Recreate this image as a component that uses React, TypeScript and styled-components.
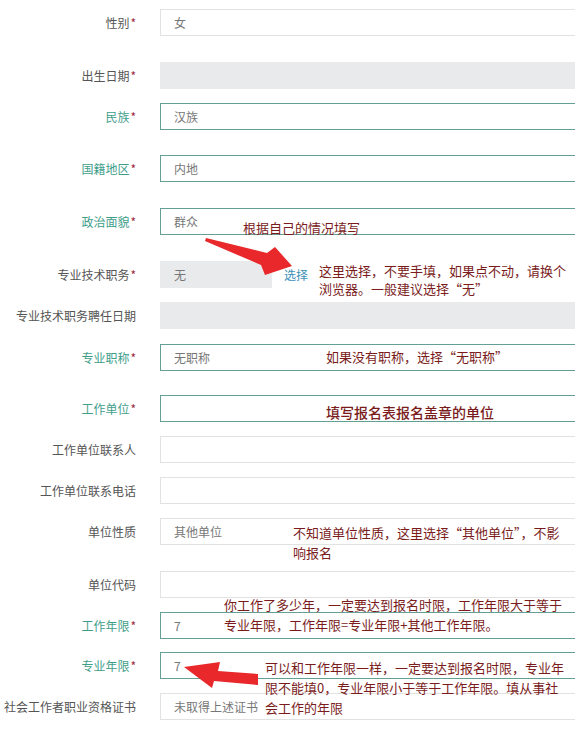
import React from "react";
import styled, { createGlobalStyle } from "styled-components";

type Tone = "plain" | "teal" | "disabled";

interface FieldRow {
    label: string;
    required?: boolean;
    accent?: boolean;
    value?: string;
    tone: Tone;
    gap: number;
    short?: boolean;
}

const rows: FieldRow[] = [
    { label: "性别", required: true, value: "女", tone: "plain", gap: 26 },
    { label: "出生日期", required: true, tone: "disabled", gap: 14 },
    { label: "民族", required: true, accent: true, value: "汉族", tone: "teal", gap: 25 },
    { label: "国籍地区", required: true, accent: true, value: "内地", tone: "teal", gap: 26 },
    { label: "政治面貌", required: true, accent: true, value: "群众", tone: "teal", gap: 26 },
    { label: "专业技术职务", required: true, value: "无", tone: "disabled", gap: 14, short: true },
    { label: "专业技术职务聘任日期", tone: "disabled", gap: 15 },
    { label: "专业职称", required: true, accent: true, value: "无职称", tone: "teal", gap: 24 },
    { label: "工作单位", required: true, accent: true, tone: "teal", gap: 14 },
    { label: "工作单位联系人", tone: "plain", gap: 14 },
    { label: "工作单位联系电话", tone: "plain", gap: 14 },
    { label: "单位性质", value: "其他单位", tone: "plain", gap: 26 },
    { label: "单位代码", tone: "plain", gap: 14 },
    { label: "工作年限", required: true, accent: true, value: "7", tone: "teal", gap: 13 },
    { label: "专业年限", required: true, accent: true, value: "7", tone: "teal", gap: 14 },
    { label: "社会工作者职业资格证书", value: "未取得上述证书", tone: "plain", gap: 0 },
];

interface NoteData {
    top: number;
    left: number;
    lines: string[];
    lh: number;
    strong?: boolean;
}

const notes: NoteData[] = [
    { top: 219, left: 243, lh: 18, lines: ["根据自己的情况填写"] },
    { top: 262, left: 319, lh: 18, lines: ["这里选择，不要手填，如果点不动，请换个", "浏览器。一般建议选择“无”"] },
    { top: 348, left: 326, lh: 18, lines: ["如果没有职称，选择“无职称”"] },
    { top: 402, left: 326, lh: 20, lines: ["填写报名表报名盖章的单位"], strong: true },
    { top: 523, left: 293, lh: 20, lines: ["不知道单位性质，这里选择“其他单位”，不影", "响报名"] },
    { top: 595, left: 224, lh: 20, lines: ["你工作了多少年，一定要达到报名时限，工作年限大于等于", "专业年限，工作年限=专业年限+其他工作年限。"] },
    { top: 658, left: 265, lh: 20, lines: ["可以和工作年限一样，一定要达到报名时限，专业年", "限不能填0，专业年限小于等于工作年限。填从事社", "会工作的年限"] },
];

const GlobalStyle = createGlobalStyle`
    body {
        margin: 0;
        background: #ffffff;
        overflow: hidden;
        font-family: "Noto Sans CJK SC", "Noto Sans", sans-serif;
    }
`;

const Page = styled.div`
    position: relative;
    width: 575px;
    height: 733px;
    overflow: hidden;
    padding-top: 9px;
    box-sizing: border-box;
`;

const Form = styled.div`
    display: flex;
    flex-direction: column;
`;

const Row = styled.div<{ $gap: number }>`
    display: flex;
    align-items: center;
    height: 27px;
    margin-bottom: ${(p) => p.$gap}px;
`;

const Label = styled.div<{ $accent?: boolean }>`
    width: 136px;
    flex-shrink: 0;
    margin-right: 24px;
    text-align: right;
    font-size: 12px;
    white-space: nowrap;
    color: ${(p) => (p.$accent ? "#3f9e8b" : "#555555")};
`;

const Star = styled.span`
    color: #9e2745;
    margin-left: 1px;
`;

const Field = styled.div<{ $tone: Tone; $short?: boolean }>`
    box-sizing: border-box;
    height: 27px;
    ${(p) => (p.$short ? "width: 112px;" : "flex: 1; margin-right: -20px;")}
    padding-left: 13px;
    display: flex;
    align-items: center;
    font-size: 12px;
    color: #777777;
    background: ${(p) => (p.$tone === "disabled" ? "#e8eaeb" : "#ffffff")};
    border: 1px solid
        ${(p) => (p.$tone === "teal" ? "#639f95" : p.$tone === "disabled" ? "#e8eaeb" : "#e2e2e2")};
`;

const Pick = styled.span`
    margin-left: 12px;
    font-size: 12px;
    color: #3b8fb8;
`;

const Note = styled.div<{ $top: number; $left: number; $lh: number; $strong?: boolean }>`
    position: absolute;
    top: ${(p) => p.$top}px;
    left: ${(p) => p.$left}px;
    font-size: ${(p) => (p.$strong ? 14 : 13)}px;
    font-weight: ${(p) => (p.$strong ? 500 : 400)};
    line-height: ${(p) => p.$lh}px;
    color: #7a1c1c;
    white-space: nowrap;
`;

const Arrows = styled.svg`
    position: absolute;
    top: 0;
    left: 0;
    pointer-events: none;
`;

const App = (): JSX.Element => (
    <Page>
        <GlobalStyle />
        <Form>
            {rows.map((r) => (
                <Row key={r.label} $gap={r.gap}>
                    <Label $accent={r.accent}>
                        {r.label}
                        {r.required && <Star>*</Star>}
                    </Label>
                    <Field $tone={r.tone} $short={r.short}>{r.value}</Field>
                    {r.short && <Pick>选择</Pick>}
                </Row>
            ))}
        </Form>
        {notes.map((n) => (
            <Note key={n.top} $top={n.top} $left={n.left} $lh={n.lh} $strong={n.strong}>
                {n.lines.map((l) => (
                    <div key={l}>{l}</div>
                ))}
            </Note>
        ))}
        <Arrows width="575" height="733" viewBox="0 0 575 733">
            <polygon
                points="206,238 267,253 275,247 292,266 265,275 261,265 205,241"
                fill="#e8282b"
            />
            <polygon
                points="184,667 220,662 218,671 258,674 258,685 214,681 212,688"
                fill="#e8282b"
            />
        </Arrows>
    </Page>
);

export default App;
